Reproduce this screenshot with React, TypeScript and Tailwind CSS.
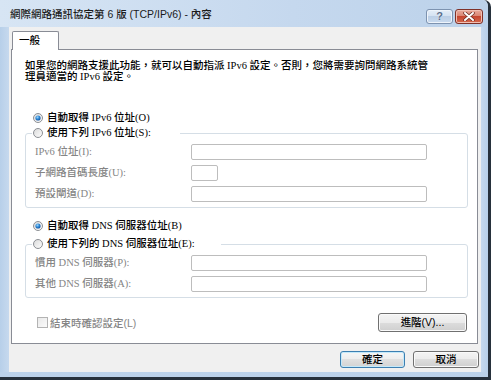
import React from "react";

function Radio({ checked }: { checked?: boolean }) {
  return (
    <svg width="10" height="10" viewBox="0 0 10 10" className="shrink-0">
      <defs>
        <linearGradient id="rgOuter" x1="0" y1="0" x2="1" y2="1">
          <stop offset="0" stopColor="#d9d9d9" />
          <stop offset="1" stopColor="#ffffff" />
        </linearGradient>
        <radialGradient id="rgDot" cx="0.4" cy="0.35" r="0.7">
          <stop offset="0" stopColor="#9fd6fb" />
          <stop offset="0.5" stopColor="#2c88d6" />
          <stop offset="1" stopColor="#15509b" />
        </radialGradient>
      </defs>
      <circle cx="5" cy="5" r="4.5" fill="url(#rgOuter)" stroke="#8c8f94" strokeWidth="1" />
      {checked && <circle cx="5" cy="5" r="2.6" fill="url(#rgDot)" />}
    </svg>
  );
}

const serif = "[font-family:'Liberation_Serif','Noto_Sans_CJK_TC',serif]";
const sans = "[font-family:'Liberation_Sans','Noto_Sans_CJK_TC',sans-serif]";

function Field({ label, wide = true }: { label: string; wide?: boolean }) {
  return (
    <div className="flex items-center h-[16px]">
      <span className="w-[156px] text-[#858585] text-[10.5px] leading-[12px] whitespace-nowrap">{label}</span>
      <div
        className={
          (wide ? "w-[236px]" : "w-[27px]") +
          " h-[16px] bg-white border border-[#bdbdbd] rounded-[2px]"
        }
      />
    </div>
  );
}

function Btn({ children, def, w, h }: { children: React.ReactNode; def?: boolean; w: string; h: string }) {
  return (
    <div
      className={
        `${w} ${h} ${sans} font-medium flex items-center justify-center text-[10.5px] text-black rounded-[3px] border ` +
        (def
          ? "border-[#3c7fb1] shadow-[inset_0_0_0_1px_#c4e9fa] bg-[linear-gradient(to_bottom,#f6f6f6_0%,#ededed_50%,#e0e0e0_50%,#d3d3d3_100%)]"
          : "border-[#707070] shadow-[inset_0_0_0_1px_#fafafa] bg-[linear-gradient(to_bottom,#f4f4f4_0%,#ebebeb_50%,#dddddd_50%,#cfcfcf_100%)]")
      }
    >
      {children}
    </div>
  );
}

export default function App() {
  return (
    <div className="w-[497px] h-[384px] bg-white overflow-hidden">
      <div className="w-[491px] h-[380px] flex flex-col border-r-[3px] border-b-[3px] border-[#27313c] rounded-tr-[7px] bg-[linear-gradient(to_bottom,#c9dbef,#bcd2ea)]">
        {/* title bar */}
        <div className="h-[27px] shrink-0 flex justify-between bg-[linear-gradient(to_right,#d7e5f4,#c5d8ee_60%,#bcd2ea)] rounded-tr-[6px]">
          <span
            className={`ml-[10px] mt-[8px] text-[10.5px] leading-[13px] font-medium text-[#1b1b1b] whitespace-nowrap [font-family:'Liberation_Sans','Noto_Sans_CJK_TC',sans-serif]`}
          >
            網際網路通訊協定第 6 版 (TCP/IPv6) - 內容
          </span>
          <div className="flex gap-[2px] mt-[9px] mr-[5px] h-[15px]">
            <div className="w-[27px] h-[15px] rounded-[3px] border border-[#7d93b0] bg-[linear-gradient(to_bottom,#e5eef8_0%,#d3e1f1_50%,#bccfe6_50%,#c9dbef_100%)] shadow-[inset_0_0_0_1px_#eef4fb] flex items-center justify-center">
              <span className="text-[11px] leading-[11px] font-bold text-[#5a6e8c] [font-family:'Liberation_Sans',sans-serif] [text-shadow:0_0_1px_#fff]">
                ?
              </span>
            </div>
            <div className="w-[28px] h-[15px] rounded-[3px] border border-[#7f3128] bg-[linear-gradient(to_bottom,#e8aa9c_0%,#d9826f_50%,#c5452f_50%,#d46a4f_100%)] shadow-[inset_0_0_0_1px_#f0bfb3] flex items-center justify-center">
              <svg width="12" height="9" viewBox="0 0 12 9">
                <path d="M2 1 L10 8 M10 1 L2 8" stroke="#6b2a20" strokeWidth="3.4" strokeLinecap="round" />
                <path d="M2 1 L10 8 M10 1 L2 8" stroke="#ffffff" strokeWidth="2" strokeLinecap="round" />
              </svg>
            </div>
          </div>
        </div>

        {/* body */}
        <div className="flex h-[345px] shrink-0">
          <div className="w-[9px] shrink-0 bg-[linear-gradient(to_right,#b7cfe9,#c6d9ee)]" />
          <div className="w-[472px] shrink-0 bg-[#f0f0f0] flex flex-col">
            {/* tab */}
            <div className="mt-[4px] ml-[3px] w-[47px] h-[19px] -mb-[1px] relative z-10 bg-white border-t border-l border-r border-[#898c95] rounded-t-[2px]">
              <span className={`${sans} font-medium absolute left-[6px] top-[2px] text-[10.5px] leading-[13px] text-black`}>一般</span>
            </div>
            {/* panel */}
            <div className={`${serif} font-medium ml-[2px] mr-[3px] h-[295px] border border-[#898c95] bg-white flex flex-col text-black`}>
              <div className="pt-[10px] pl-[13px] text-[10.5px] leading-[11px] whitespace-nowrap">
                如果您的網路支援此功能，就可以自動指派 IPv6 設定。否則，您將需要詢問網路系統管
                <br />
                理員適當的 IPv6 設定。
              </div>

              <div className="mt-[30px] h-[12px] pl-[21px] flex items-center gap-[4px] text-[10.5px] leading-[12px]">
                <Radio checked />
                <span>自動取得 IPv6 位址(O)</span>
              </div>

              <div className="relative mt-[9px] ml-[13px] mr-[9px] border border-[#d5dee6] rounded-[3px] pt-[10px] pb-[5px] pl-[9px] flex flex-col gap-[5px]">
                <div className="absolute left-[6px] -top-[7px] w-[148px] h-[12px] bg-white pl-[1px] flex items-center gap-[4px] text-[10.5px] leading-[12px] whitespace-nowrap">
                  <Radio />
                  <span>使用下列 IPv6 位址(S):</span>
                </div>
                <Field label="IPv6 位址(I):" />
                <Field label="子網路首碼長度(U):" wide={false} />
                <Field label="預設閘道(D):" />
              </div>

              <div className="mt-[12px] h-[12px] pl-[21px] flex items-center gap-[4px] text-[10.5px] leading-[12px]">
                <Radio checked />
                <span>自動取得 DNS 伺服器位址(B)</span>
              </div>

              <div className="relative mt-[12px] ml-[13px] mr-[9px] border border-[#d5dee6] rounded-[3px] pt-[10px] pb-[5px] pl-[9px] flex flex-col gap-[5px]">
                <div className="absolute left-[6px] -top-[7px] w-[189px] h-[12px] bg-white pl-[1px] flex items-center gap-[4px] text-[10.5px] leading-[12px] whitespace-nowrap">
                  <Radio />
                  <span>使用下列的 DNS 伺服器位址(E):</span>
                </div>
                <Field label="慣用 DNS 伺服器(P):" />
                <Field label="其他 DNS 伺服器(A):" />
              </div>

              <div className="mt-[15px] h-[19px] flex items-center justify-between pl-[25px] pr-[10px]">
                <div className={`${sans} flex items-center gap-[2px] text-[10.5px] leading-[12px] text-[#858585]`}>
                  <div className="w-[11px] h-[11px] border border-[#b3b3b3] bg-[linear-gradient(to_bottom_right,#e9e9e9,#fbfbfb)]" />
                  <span>結束時確認設定(L)</span>
                </div>
                <Btn w="w-[89px]" h="h-[19px]">進階(V)...</Btn>
              </div>
            </div>

            {/* dialog buttons */}
            <div className="mt-[7px] mr-[2px] flex justify-end gap-[8px]">
              <Btn def w="w-[65px]" h="h-[17px]">確定</Btn>
              <Btn w="w-[66px]" h="h-[17px]">取消</Btn>
            </div>
          </div>
          <div className="w-[7px] shrink-0 bg-[linear-gradient(to_right,#c6d9ee,#b7cfe9)]" />
        </div>
        <div className="h-[5px] shrink-0" />
      </div>
    </div>
  );
}
